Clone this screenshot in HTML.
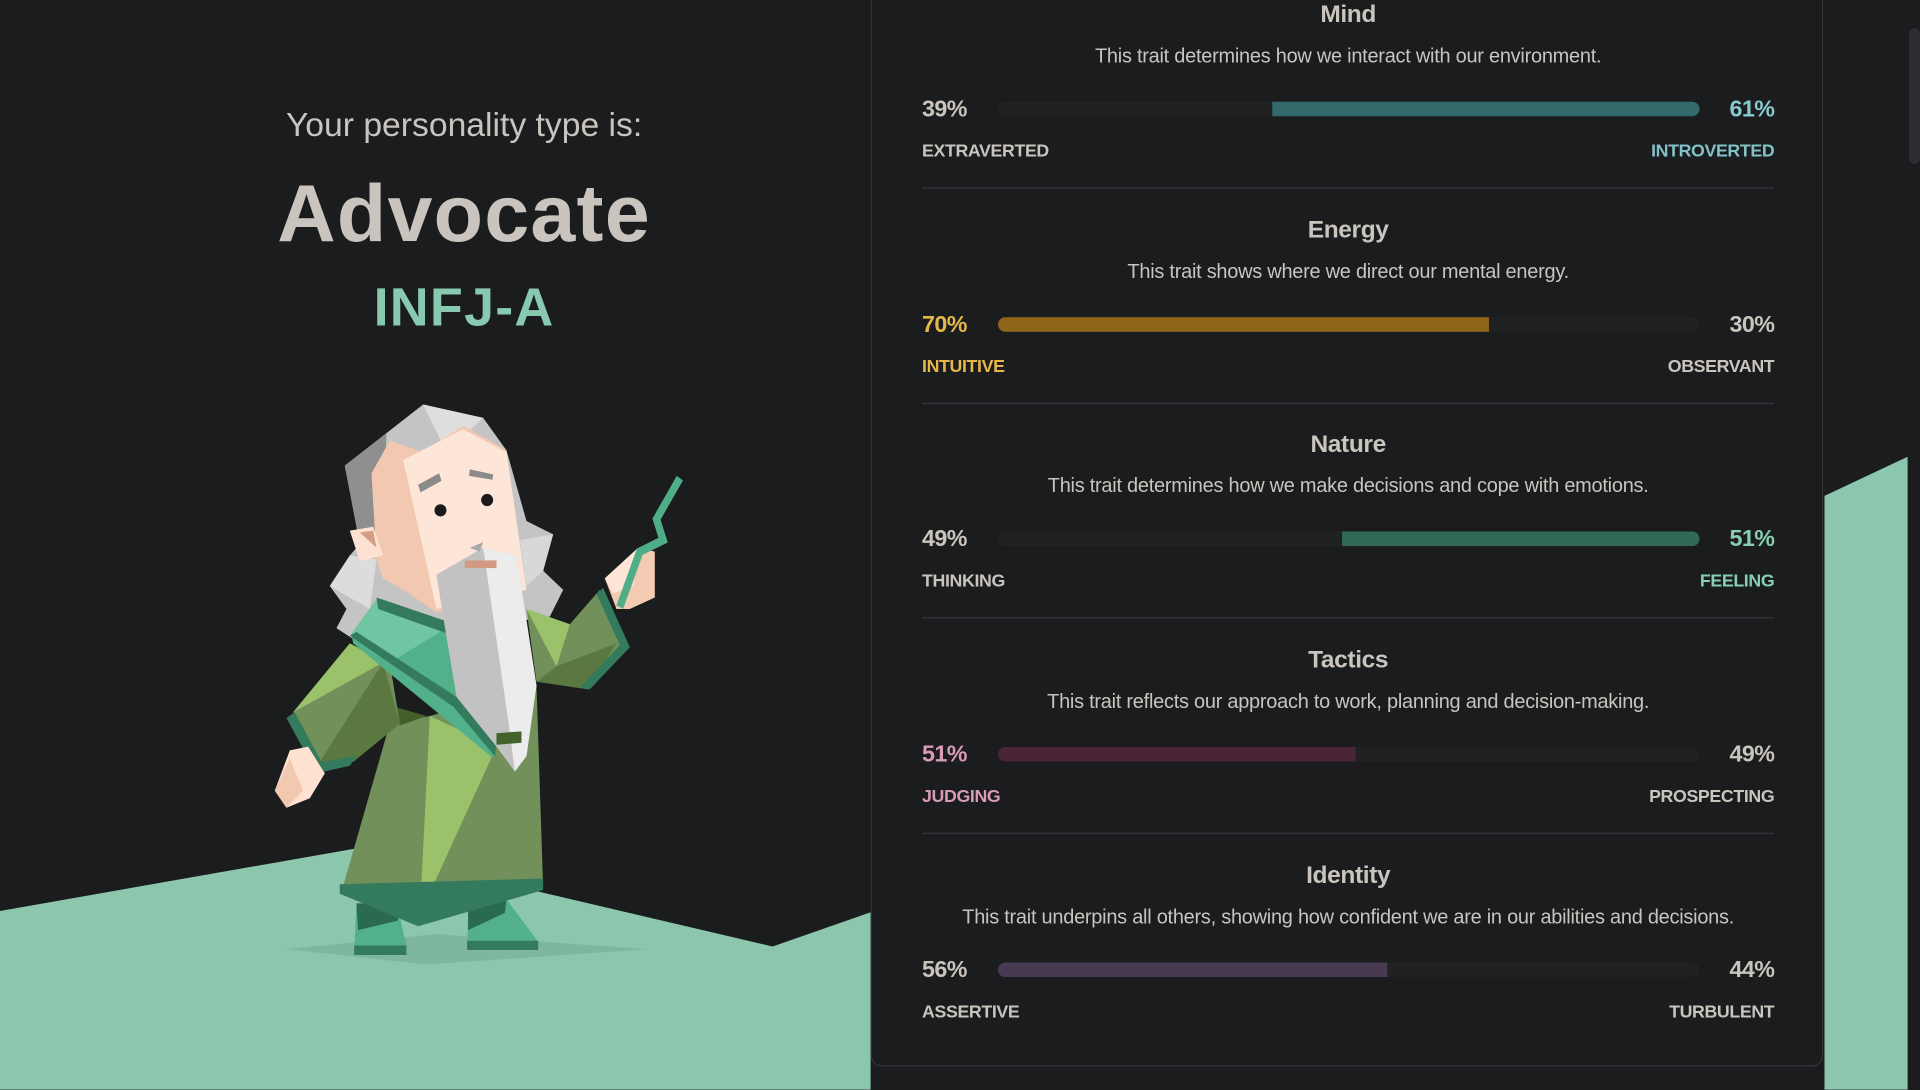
<!DOCTYPE html>
<html><head><meta charset="utf-8"><style>
html,body{margin:0;padding:0;background:#1b1c1e;overflow:hidden;width:1920px;height:1079px}
#s{position:absolute;left:0;top:0;width:1568px;height:890px;transform:scale(1.22449);transform-origin:0 0;font-family:"Liberation Sans",sans-serif}
.abs{position:absolute}
#panel{position:absolute;left:711px;top:-10px;width:778px;height:881px;background:#1b1c1e;border:1px solid #333538;border-top:none;border-radius:0 0 9px 9px;box-sizing:border-box}
.sec{position:absolute;left:41px;width:696px;height:175px}
.t{position:absolute;left:0;right:0;text-align:center;color:#c9c4bd;font-size:20px;font-weight:bold;letter-spacing:-0.3px}
.d{position:absolute;left:0;right:0;text-align:center;color:#c9c4bd;font-size:16.3px;letter-spacing:-0.2px}
.p{position:absolute;font-size:19px;font-weight:bold;color:#c9c4bd;letter-spacing:-0.5px}
.l{position:absolute;font-size:14.5px;font-weight:bold;color:#c9c4bd;letter-spacing:-0.3px}
.track{position:absolute;left:62px;width:573px;height:12px;background:#202123;border-radius:6px;overflow:hidden}
.fill{position:absolute;top:0;height:12px}
.hr{position:absolute;left:0;right:0;height:1px;background:#35373a}
</style></head><body><div id="s">
<svg class="abs" style="left:0;top:0" width="1568" height="890">
<polygon points="0,744 290,693 631,773 711,745 711,890 0,890" fill="#8cc6ad"/>
<polygon points="1490,405 1558,373 1558,890 1490,890" fill="#8cc6ad"/>
</svg>
<div class="abs" style="left:1558px;top:0;width:10px;height:890px;background:#1b1c1e"></div>
<div class="abs" style="left:1559px;top:23px;width:9px;height:111px;background:#2b2d30;border-radius:5px"></div>

<div class="abs" style="left:0;width:758px;top:86px;text-align:center;color:#c9c4bd;font-size:27.5px">Your personality type is:</div>
<div class="abs" style="left:0;width:758px;top:136px;text-align:center;color:#c9c4bd;font-size:66px;font-weight:bold;letter-spacing:1px">Advocate</div>
<div class="abs" style="left:0;width:758px;top:227px;text-align:center;color:#88c9af;font-size:44px;font-weight:bold;letter-spacing:1px">INFJ-A</div>

<svg class="abs" style="left:204px;top:310px" width="375.7" height="562" viewBox="0 0 1380 1800" preserveAspectRatio="none">
<polygon points="110,1490 560,1450 1190,1490 530,1530" fill="#7fb6a0"/>
<polygon points="320,1370 440,1370 470,1480 470,1505 313,1505" fill="#52b08a"/>
<rect x="313" y="1480" width="157" height="25" fill="#347a5c"/>
<polygon points="655,1390 770,1360 865,1470 865,1490 652,1490" fill="#52b08a"/>
<rect x="652" y="1468" width="213" height="24" fill="#347a5c"/>
<polygon points="320,1370 440,1370 445,1415 325,1440" fill="#2a6a4e"/>
<polygon points="655,1390 770,1360 765,1395 655,1440" fill="#2a6a4e"/>
<polygon points="285,225 410,140 520,65 700,100 770,185 830,370 910,405 880,500 940,550 900,620 330,690 260,650 290,600 240,540 300,460 330,430" fill="#c4c4c4"/>
<polygon points="285,225 410,140 400,400 330,430" fill="#8f8f8f"/>
<polygon points="240,540 300,460 380,470 360,600" fill="#dcdcdc"/>
<polygon points="520,65 700,100 590,190" fill="#dedede"/>
<polygon points="810,420 910,405 880,500 830,540" fill="#d8d8d8"/>
<polygon points="365,245 420,160 520,190 640,120 770,185 830,550 560,610 480,560 400,520 380,470" fill="#f2c9b0"/>
<polygon points="460,210 640,130 770,190 830,550 560,600" fill="#fde5d7"/>
<polygon points="300,395 370,385 400,460 330,475" fill="#fde2d2"/>
<polygon points="330,400 370,395 380,440" fill="#d49d85"/>
<ellipse cx="572" cy="342" rx="18" ry="16" fill="#1a1a1a"/>
<ellipse cx="712" cy="315" rx="18" ry="16" fill="#1a1a1a"/>
<polygon points="505,275 568,245 575,265 512,295" fill="#8a8a8a"/>
<polygon points="660,235 730,248 728,262 658,252" fill="#8a8a8a"/>
<polygon points="420,900 540,880 860,800 880,1330 510,1400 275,1340" fill="#72905a"/>
<polygon points="540,880 740,960 510,1400" fill="#9ac26b"/>
<polygon points="410,850 530,880 450,905" fill="#445f2a"/>
<polygon points="270,1320 880,1305 880,1335 505,1430 270,1345" fill="#347a5c"/>
<polygon points="130,870 300,690 420,740 450,900 310,1000 210,1000" fill="#72905a"/>
<polygon points="130,870 300,690 400,740" fill="#9ac26b"/>
<polygon points="400,740 450,900 310,1000 210,1000" fill="#5a7840"/>
<polygon points="110,885 135,870 215,1000 320,985 300,1010 200,1030" fill="#347a5c"/>
<polygon points="75,1075 120,970 175,960 225,1030 180,1095 110,1120" fill="#fde2d2"/>
<polygon points="75,1075 120,990 160,1075 110,1120" fill="#f2c9b0"/>
<polygon points="830,600 960,640 1050,550 1135,700 1015,810 860,790" fill="#72905a"/>
<polygon points="830,600 960,640 920,750" fill="#9ac26b"/>
<polygon points="920,750 1100,690 1015,810 860,790" fill="#5a7840"/>
<polygon points="1040,560 1060,545 1140,700 1020,810 990,805 1110,695" fill="#347a5c"/>
<polygon points="1065,520 1165,440 1215,450 1215,570 1140,600 1100,600" fill="#f3cbb3"/>
<polygon points="1065,520 1165,440 1150,540 1090,560" fill="#fde5d7"/>
<polyline points="1110,595 1170,450 1240,420 1220,365 1290,258" fill="none" stroke="#4fae88" stroke-width="22"/>
<polygon points="305,665 380,575 600,640 620,830 740,930 730,990 310,690" fill="#52b08a"/>
<polygon points="305,665 380,575 590,650 440,730" fill="#70c6a2"/>
<polygon points="380,570 600,635 595,665 385,600" fill="#347a5c"/>
<polygon points="300,670 320,660 620,830 745,925 735,985 610,855" fill="#347a5c"/>
<polygon points="560,510 700,440 800,460 860,800 830,985 795,1025 740,960 620,830 580,620" fill="#c2c2c2"/>
<polygon points="700,440 800,460 860,800 830,985 795,1025 780,920" fill="#ececec"/>
<polygon points="700,425 660,440 690,450" fill="#a8a8a8"/>
<polygon points="740,925 815,920 815,950 740,955" fill="#44622c"/>
<rect x="645" y="473" width="95" height="20" fill="#d29a83"/>
</svg>

<div id="panel">
 <div class="sec" style="top:21px">
  <div class="t" style="top:-10px">Mind</div>
  <div class="d" style="top:26px">This trait determines how we interact with our environment.</div>
  <div class="p" style="left:0;top:68px">39%</div>
  <div class="track" style="top:72px"><div class="fill" style="left:224px;right:0;background:#33696a;border-radius:0 6px 6px 0"></div></div>
  <div class="p" style="right:0;top:68px;color:#88c9cc">61%</div>
  <div class="l" style="left:0;top:105px">EXTRAVERTED</div>
  <div class="l" style="right:0;top:105px;color:#82c2c6">INTROVERTED</div>
  <div class="hr" style="top:142px"></div>
 </div>
 <div class="sec" style="top:196.5px">
  <div class="t" style="top:-10px">Energy</div>
  <div class="d" style="top:26px">This trait shows where we direct our mental energy.</div>
  <div class="p" style="left:0;top:68px;color:#e6b84a">70%</div>
  <div class="track" style="top:72px"><div class="fill" style="left:0;width:401px;background:#8f6519;border-radius:6px 0 0 6px"></div></div>
  <div class="p" style="right:0;top:68px">30%</div>
  <div class="l" style="left:0;top:105px;color:#e6b84a">INTUITIVE</div>
  <div class="l" style="right:0;top:105px">OBSERVANT</div>
  <div class="hr" style="top:142px"></div>
 </div>
 <div class="sec" style="top:372px">
  <div class="t" style="top:-10px">Nature</div>
  <div class="d" style="top:26px">This trait determines how we make decisions and cope with emotions.</div>
  <div class="p" style="left:0;top:68px">49%</div>
  <div class="track" style="top:72px"><div class="fill" style="left:281px;right:0;background:#316954;border-radius:0 6px 6px 0"></div></div>
  <div class="p" style="right:0;top:68px;color:#86cfb0">51%</div>
  <div class="l" style="left:0;top:105px">THINKING</div>
  <div class="l" style="right:0;top:105px;color:#86cfb0">FEELING</div>
  <div class="hr" style="top:142px"></div>
 </div>
 <div class="sec" style="top:548px">
  <div class="t" style="top:-10px">Tactics</div>
  <div class="d" style="top:26px">This trait reflects our approach to work, planning and decision-making.</div>
  <div class="p" style="left:0;top:68px;color:#d99ab8">51%</div>
  <div class="track" style="top:72px"><div class="fill" style="left:0;width:292px;background:#4a2437;border-radius:6px 0 0 6px"></div></div>
  <div class="p" style="right:0;top:68px">49%</div>
  <div class="l" style="left:0;top:105px;color:#d99ab8">JUDGING</div>
  <div class="l" style="right:0;top:105px">PROSPECTING</div>
  <div class="hr" style="top:142px"></div>
 </div>
 <div class="sec" style="top:723.5px">
  <div class="t" style="top:-10px">Identity</div>
  <div class="d" style="top:26px">This trait underpins all others, showing how confident we are in our abilities and decisions.</div>
  <div class="p" style="left:0;top:68px">56%</div>
  <div class="track" style="top:72px"><div class="fill" style="left:0;width:318px;background:#473a52;border-radius:6px 0 0 6px"></div></div>
  <div class="p" style="right:0;top:68px">44%</div>
  <div class="l" style="left:0;top:105px">ASSERTIVE</div>
  <div class="l" style="right:0;top:105px">TURBULENT</div>
 </div>
</div>
</div></body></html>
